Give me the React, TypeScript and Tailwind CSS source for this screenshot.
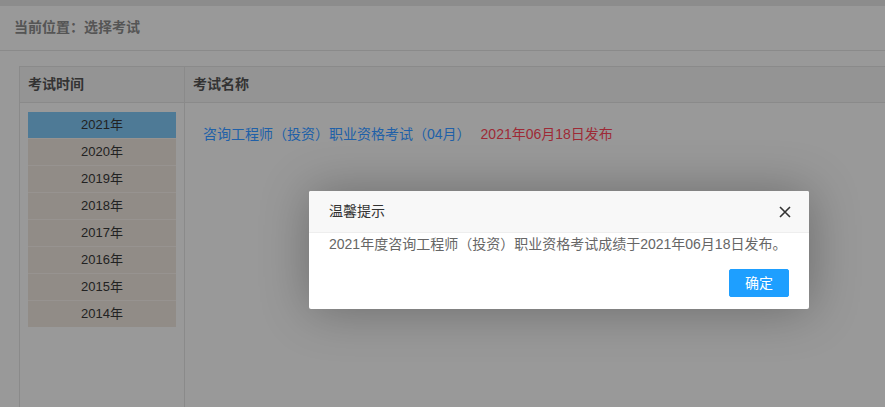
import React from "react";

const years = ["2021年", "2020年", "2019年", "2018年", "2017年", "2016年", "2015年", "2014年"];

export default function App() {
  return (
    <div
      className="relative w-[885px] h-[407px] overflow-hidden bg-[#999999]"
      style={{ fontFamily: '"Liberation Sans", "Noto Sans CJK SC", sans-serif' }}
    >
      <div className="h-[6px] bg-[#8c8c8c]" />
      <div className="h-[45px] border-b border-[#8a8a8a] flex items-center pl-[14px] pb-[1px] text-[14px] font-bold text-[#555555]">
        当前位置：选择考试
      </div>
      <div className="pl-[19px] pt-[15px]">
        <div className="flex h-[400px] border-l border-t border-[#8a8a8a]">
          <div className="w-[165px] shrink-0 border-r border-[#8a8a8a]">
            <div className="h-[36px] border-b border-[#8a8a8a] bg-[#949494] flex items-center pl-[8px] text-[14px] font-bold text-[#333333]">
              考试时间
            </div>
            <div className="pl-[8px] pt-[9px]">
              <div className="w-[148px]">
                {years.map((y, i) => (
                  <div
                    key={y}
                    className={
                      i === 0
                        ? "h-[26px] bg-[#4e7a96] flex items-center justify-center text-[13px] text-[#222222]"
                        : "h-[27px] border-t border-[#979390] bg-[#918c87] flex items-center justify-center text-[13px] text-[#222222]"
                    }
                  >
                    {y}
                  </div>
                ))}
              </div>
            </div>
          </div>
          <div className="flex-1">
            <div className="h-[36px] border-b border-[#8a8a8a] bg-[#949494] flex items-center pl-[8px] text-[14px] font-bold text-[#333333]">
              考试名称
            </div>
            <div className="pl-[18px] pt-[21px] flex items-center gap-[10px] text-[14px] leading-[20px]">
              <span className="text-[#2060a8]">咨询工程师（投资）职业资格考试（04月）</span>
              <span className="text-[#9e2a36]">2021年06月18日发布</span>
            </div>
          </div>
        </div>
      </div>

      <div className="absolute left-[309px] top-[191px] w-[500px] bg-white rounded-[2px] shadow-[1px_1px_50px_rgba(0,0,0,0.3)]">
        <div className="relative h-[42px] bg-[#f8f8f8] border-b border-[#eeeeee] flex items-center pl-[20px] text-[14px] text-[#333333] rounded-t-[2px]">
          温馨提示
          <svg
            className="absolute right-[18px] top-[15px]"
            width="12"
            height="12"
            viewBox="0 0 12 12"
          >
            <path d="M1 1 L11 11 M11 1 L1 11" stroke="#333333" strokeWidth="1.6" fill="none" />
          </svg>
        </div>
        <div className="px-[20px] text-[14px] leading-[22px] text-[#666666]">
          2021年度咨询工程师（投资）职业资格考试成绩于2021年06月18日发布。
        </div>
        <div className="flex justify-end pt-[14px] pr-[20px] pb-[12px]">
          <button className="h-[28px] px-[15px] bg-[#1e9fff] border border-[#1e9fff] rounded-[2px] text-white text-[14px] leading-[26px]">
            确定
          </button>
        </div>
      </div>
    </div>
  );
}
